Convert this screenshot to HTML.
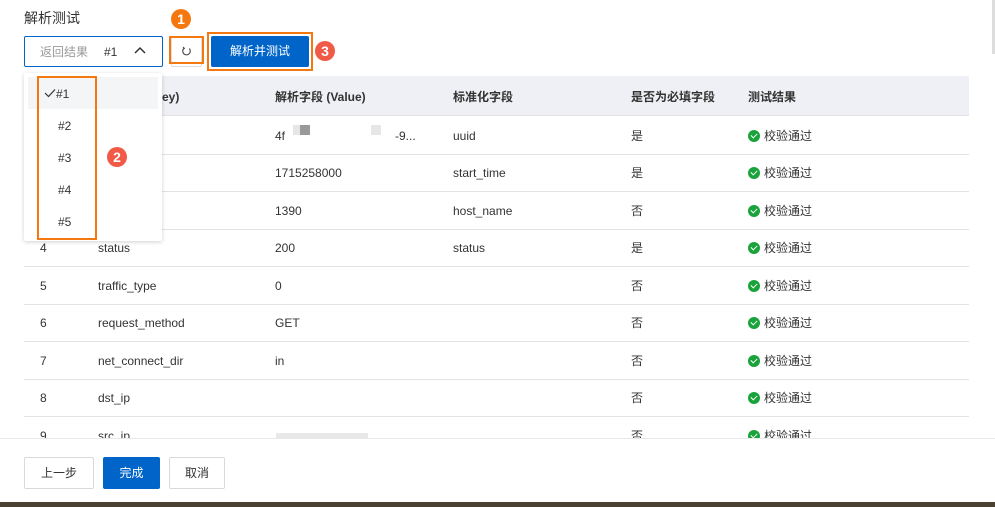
<!DOCTYPE html>
<html><head><meta charset="utf-8"><style>
*{margin:0;padding:0;box-sizing:border-box}
body{width:995px;height:507px;overflow:hidden;background:#fff;font-family:"Liberation Sans","Noto Sans CJK SC",sans-serif;font-size:12px;line-height:14px;color:#333;position:relative}
.a{position:absolute}
.row{position:absolute;left:24px;width:945px;height:37.5px;border-bottom:1px solid #e3e3e3}
.row span{position:absolute;top:12px;white-space:nowrap;line-height:14px}
.ok{display:inline-block;width:12px;height:12px;border-radius:50%;background:#1aa23b;vertical-align:-2px;margin-right:4px;position:relative}
.ok:after{content:"";position:absolute;left:3px;top:3px;width:5px;height:3px;border-left:1.6px solid #fff;border-bottom:1.6px solid #fff;transform:rotate(-45deg)}
.badge{position:absolute;width:20px;height:20px;border-radius:50%;color:#fff;font-weight:bold;font-size:14px;text-align:center;line-height:20px}
.btn{position:absolute;top:457px;height:32px;border:1px solid #d9d9d9;border-radius:2px;line-height:30px;text-align:center;font-size:12px;background:#fff}
.dd{position:absolute;left:58px;font-size:12px}
</style></head><body>
<div class="a" style="left:24px;top:10px;font-size:14px;line-height:16px;color:#333">解析测试</div>
<div class="a" style="left:24px;top:36px;width:139px;height:31px;border:1px solid #0064c8;border-radius:2px"></div>
<div class="a" style="left:40px;top:45px;color:#999">返回结果</div>
<div class="a" style="left:104px;top:45px;color:#333">#1</div>
<svg class="a" style="left:134px;top:46px" width="12" height="10"><path d="M1 7 L6 2 L11 7" fill="none" stroke="#333" stroke-width="1.5"/></svg>
<div class="a" style="left:171px;top:36px;width:31px;height:31px;border:1px solid #ddd;border-radius:2px"></div>
<svg class="a" style="left:181px;top:46px" width="11" height="11"><path d="M8.3 2.5 A3.8 3.8 0 1 1 3 2.2" fill="none" stroke="#444" stroke-width="1.1"/><path d="M2 1 L3.4 2.4 L2 3.6" fill="none" stroke="#444" stroke-width="1"/></svg>
<div class="a" style="left:169px;top:36px;width:35px;height:28px;border:2px solid #f5770f"></div>
<div class="a" style="left:211px;top:36px;width:98px;height:31px;background:#0064c8;border-radius:2px;color:#fff;text-align:center;line-height:31px;font-size:12px">解析并测试</div>
<div class="a" style="left:207px;top:32px;width:106px;height:39px;border:2px solid #f5770f"></div>
<div class="badge" style="left:171px;top:9px;background:#f5770f">1</div>
<div class="badge" style="left:315px;top:41px;background:#f05a46">3</div>

<div class="a" style="left:24px;top:76px;width:945px;height:40px;background:#eef0f5;border-bottom:1px solid #e3e3e3"></div>
<div class="a" style="left:98px;top:90px;font-weight:bold">解析字段 (Key)</div>
<div class="a" style="left:275px;top:90px;font-weight:bold">解析字段 (Value)</div>
<div class="a" style="left:453px;top:90px;font-weight:bold">标准化字段</div>
<div class="a" style="left:631px;top:90px;font-weight:bold">是否为必填字段</div>
<div class="a" style="left:748px;top:90px;font-weight:bold">测试结果</div>

<div class="row" style="top:117px"><span style="left:16px">1</span><span style="left:74px">log_uuid</span><span style="left:251px">4f</span><span style="left:276px;top:8px;width:10px;height:10px;background:#999"></span><span style="left:269px;top:8px;width:7px;height:10px;background:#e6e6e6"></span><span style="left:347px;top:8px;width:10px;height:10px;background:#e6e6e6"></span><span style="left:371px">-9...</span><span style="left:429px">uuid</span><span style="left:607px">是</span><span style="left:724px"><i class="ok"></i>校验通过</span></div>
<div class="row" style="top:154px"><span style="left:16px">2</span><span style="left:74px">start_time</span><span style="left:251px">1715258000</span><span style="left:429px">start_time</span><span style="left:607px">是</span><span style="left:724px"><i class="ok"></i>校验通过</span></div>
<div class="row" style="top:192px"><span style="left:16px">3</span><span style="left:74px">host_name</span><span style="left:251px">1390</span><span style="left:429px">host_name</span><span style="left:607px">否</span><span style="left:724px"><i class="ok"></i>校验通过</span></div>
<div class="row" style="top:229px"><span style="left:16px">4</span><span style="left:74px">status</span><span style="left:251px">200</span><span style="left:429px">status</span><span style="left:607px">是</span><span style="left:724px"><i class="ok"></i>校验通过</span></div>
<div class="row" style="top:267px"><span style="left:16px">5</span><span style="left:74px">traffic_type</span><span style="left:251px">0</span><span style="left:607px">否</span><span style="left:724px"><i class="ok"></i>校验通过</span></div>
<div class="row" style="top:304px"><span style="left:16px">6</span><span style="left:74px">request_method</span><span style="left:251px">GET</span><span style="left:607px">否</span><span style="left:724px"><i class="ok"></i>校验通过</span></div>
<div class="row" style="top:342px"><span style="left:16px">7</span><span style="left:74px">net_connect_dir</span><span style="left:251px">in</span><span style="left:607px">否</span><span style="left:724px"><i class="ok"></i>校验通过</span></div>
<div class="row" style="top:379px"><span style="left:16px">8</span><span style="left:74px">dst_ip</span><span style="left:607px">否</span><span style="left:724px"><i class="ok"></i>校验通过</span></div>
<div class="row" style="top:417px;border:none"><span style="left:16px">9</span><span style="left:74px">src_ip</span><span style="left:252px;top:16px;width:92px;height:6px;background:#e8e8e8"></span><span style="left:607px">否</span><span style="left:724px"><i class="ok"></i>校验通过</span></div>

<div class="a" style="left:0;top:438px;width:995px;height:64px;background:#fff;border-top:1px solid #e8e8e8"></div>
<div class="btn" style="left:24px;width:70px">上一步</div>
<div class="btn" style="left:103px;width:57px;background:#0064c8;border-color:#0064c8;color:#fff">完成</div>
<div class="btn" style="left:169px;width:56px">取消</div>
<div class="a" style="left:0;top:502px;width:995px;height:5px;background:#4a4132"></div>
<div class="a" style="left:992px;top:0;width:3px;height:54px;background:#ddd"></div>

<div class="a" style="left:24px;top:73px;width:138px;height:168px;background:#fff;border-radius:2px;box-shadow:0 1px 4px rgba(0,0,0,.18)"></div>
<div class="a" style="left:28px;top:77px;width:130px;height:32px;background:#f4f5f7"></div>
<svg class="a" style="left:44px;top:88px" width="12" height="10"><path d="M1 5 L4.5 8.5 L11 1.5" fill="none" stroke="#333" stroke-width="1.2"/></svg>
<div class="dd" style="top:87px;left:56px">#1</div>
<div class="dd" style="top:119px">#2</div>
<div class="dd" style="top:151px">#3</div>
<div class="dd" style="top:183px">#4</div>
<div class="dd" style="top:215px">#5</div>
<div class="a" style="left:37px;top:76px;width:60px;height:164px;border:2px solid #f5770f"></div>
<div class="badge" style="left:107px;top:147px;background:#f05a46">2</div>
</body></html>
